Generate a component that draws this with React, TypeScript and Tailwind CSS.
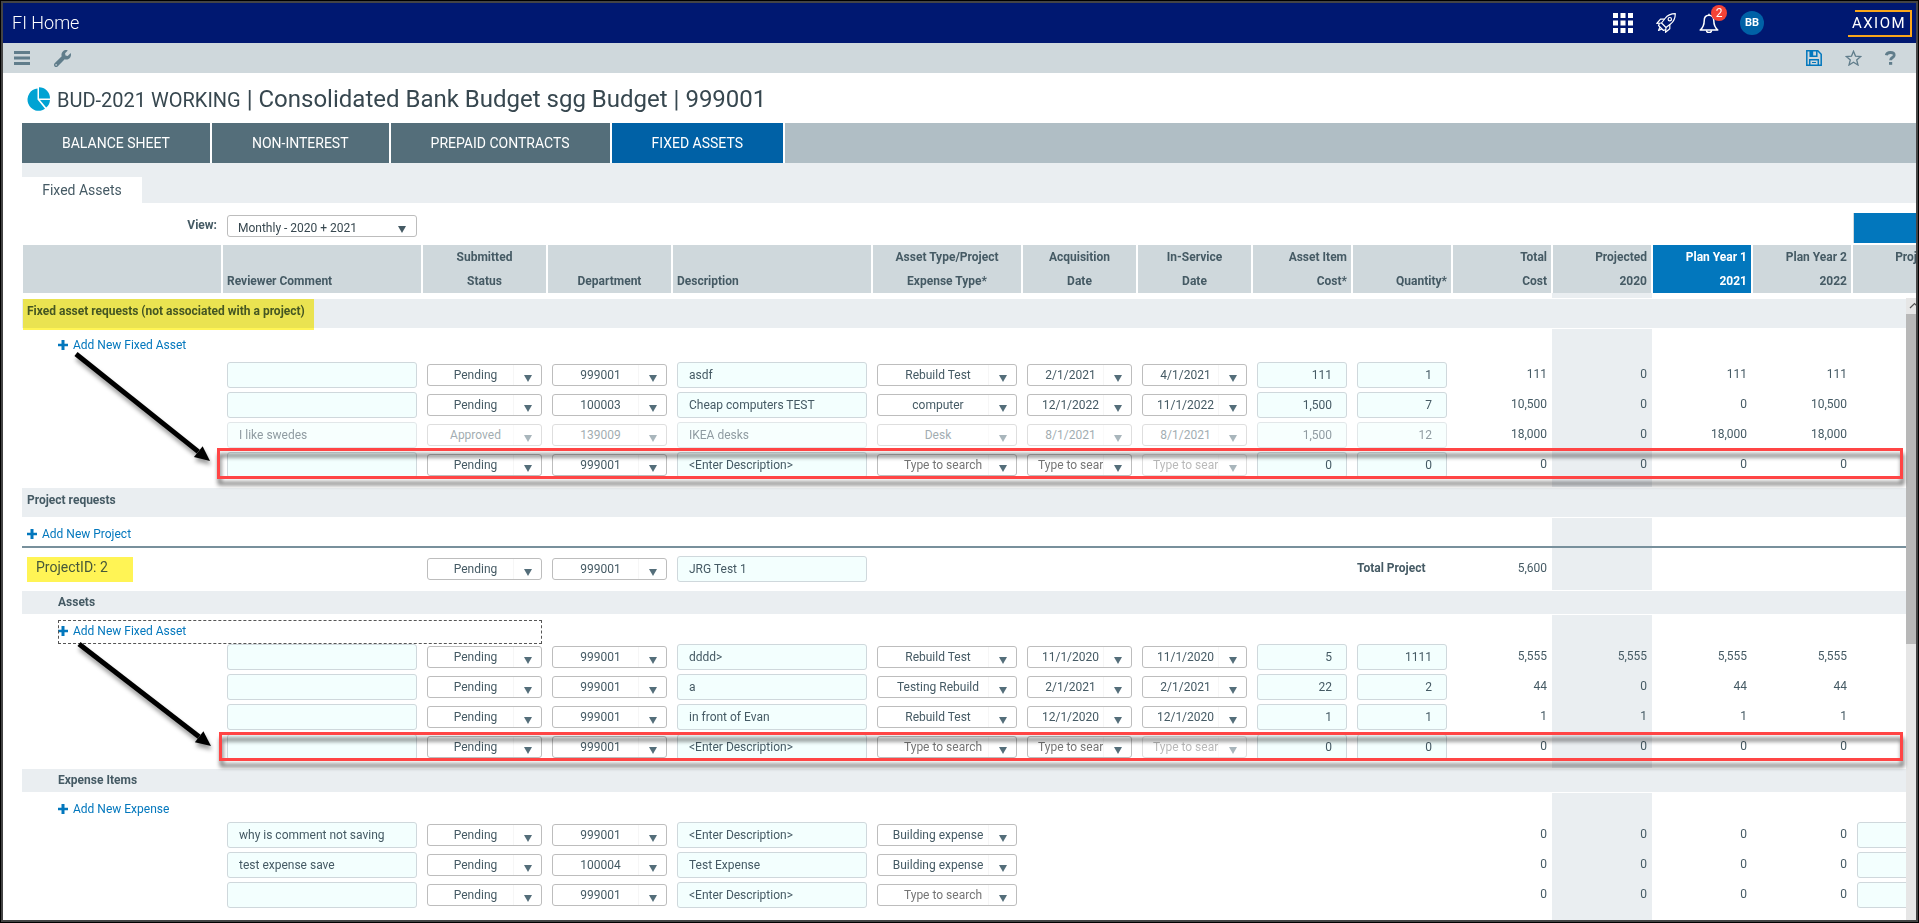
import React from "react";
import { FaWrench } from "react-icons/fa";

type Cell = { v: string; off?: boolean; hint?: boolean };
type Row = {
  comment?: string | null;
  status?: string;
  dept?: string;
  desc?: string;
  type?: Cell;
  acq?: Cell;
  svc?: Cell;
  cost?: string;
  qty?: string;
  totals: string[];
  off?: boolean;
  tail?: boolean;
};

const hint = "Type to search";
const blankAsset: Row = {
  comment: "",
  status: "Pending",
  dept: "999001",
  desc: "<Enter Description>",
  type: { v: hint, hint: true },
  acq: { v: hint, hint: true },
  svc: { v: hint, hint: true, off: true },
  cost: "0",
  qty: "0",
  totals: ["0", "0", "0", "0"],
};

const assets: Row[] = [
  { comment: "", status: "Pending", dept: "999001", desc: "asdf", type: { v: "Rebuild Test" }, acq: { v: "2/1/2021" }, svc: { v: "4/1/2021" }, cost: "111", qty: "1", totals: ["111", "0", "111", "111"] },
  { comment: "", status: "Pending", dept: "100003", desc: "Cheap computers TEST", type: { v: "computer" }, acq: { v: "12/1/2022" }, svc: { v: "11/1/2022" }, cost: "1,500", qty: "7", totals: ["10,500", "0", "0", "10,500"] },
  { comment: "I like swedes", status: "Approved", dept: "139009", desc: "IKEA desks", type: { v: "Desk" }, acq: { v: "8/1/2021" }, svc: { v: "8/1/2021" }, cost: "1,500", qty: "12", totals: ["18,000", "0", "18,000", "18,000"], off: true },
  blankAsset,
];

const projectAssets: Row[] = [
  { comment: "", status: "Pending", dept: "999001", desc: "dddd>", type: { v: "Rebuild Test" }, acq: { v: "11/1/2020" }, svc: { v: "11/1/2020" }, cost: "5", qty: "1111", totals: ["5,555", "5,555", "5,555", "5,555"] },
  { comment: "", status: "Pending", dept: "999001", desc: "a", type: { v: "Testing Rebuild" }, acq: { v: "2/1/2021" }, svc: { v: "2/1/2021" }, cost: "22", qty: "2", totals: ["44", "0", "44", "44"] },
  { comment: "", status: "Pending", dept: "999001", desc: "in front of Evan", type: { v: "Rebuild Test" }, acq: { v: "12/1/2020" }, svc: { v: "12/1/2020" }, cost: "1", qty: "1", totals: ["1", "1", "1", "1"] },
  blankAsset,
];

const expenses: Row[] = [
  { comment: "why is comment not saving", status: "Pending", dept: "999001", desc: "<Enter Description>", type: { v: "Building expense" }, totals: ["0", "0", "0", "0"], tail: true },
  { comment: "test expense save", status: "Pending", dept: "100004", desc: "Test Expense", type: { v: "Building expense" }, totals: ["0", "0", "0", "0"], tail: true },
  { comment: "", status: "Pending", dept: "999001", desc: "<Enter Description>", type: { v: hint, hint: true }, totals: ["0", "0", "0", "0"], tail: true },
];

function Columns() {
  return (
    <colgroup>
      <col className="w-[200px]" />
      <col className="w-[200px]" />
      <col className="w-[125px]" />
      <col className="w-[125px]" />
      <col className="w-[200px]" />
      <col className="w-[150px]" />
      <col className="w-[115px]" />
      <col className="w-[115px]" />
      <col className="w-[100px]" />
      <col className="w-[100px]" />
      <col className="w-[100px]" />
      <col className="w-[100px]" />
      <col className="w-[100px]" />
      <col className="w-[100px]" />
      <col className="w-[100px]" />
    </colgroup>
  );
}

function TextBox({ label, value, right, off }: { label: string; value: string; right?: boolean; off?: boolean }) {
  return (
    <input
      type="text"
      aria-label={label}
      defaultValue={value}
      disabled={off}
      className={`block h-[26px] w-full rounded-[3px] border border-[#cfd8dc] bg-[#f3fffe] text-xs text-[#455a64] ${
        right ? "pr-[14px] text-right" : "pl-[11px]"
      } ${off ? "opacity-60" : ""}`}
    />
  );
}

function Combo({ label, cell, off, wide }: { label: string; cell: Cell; off?: boolean; wide?: boolean }) {
  const dim = off || cell.off;
  return (
    <div className={`relative ${dim ? "opacity-50" : ""}`}>
      <select
        aria-label={label}
        disabled={dim}
        defaultValue={cell.v}
        className={`block h-[22px] w-full appearance-none rounded-[3px] border border-[#bdbdbd] bg-white pr-[28px] text-center text-xs ${
          cell.hint ? "text-[#757575]" : "text-[#455a64]"
        } ${cell.hint && wide ? "pl-5" : "pl-[10px]"}`}
      >
        <option>{cell.v}</option>
      </select>
      <span className="pointer-events-none absolute inset-y-px right-px flex w-7 justify-center border-l border-[#f6f6f6] pt-[10px]">
        <svg width="8" height="7" viewBox="0 0 8 7" className="fill-[#546e7a]">
          <path d="M0 0h8L4 7z" />
        </svg>
      </span>
    </div>
  );
}

function Amount({ value, shaded }: { value?: string; shaded?: boolean }) {
  return (
    <td className={`px-[5px] text-right align-top leading-7 ${shaded ? "bg-[#eaeef1]" : ""}`}>{value}</td>
  );
}

function DataRow({ row }: { row: Row }) {
  return (
    <tr className="h-[30px]">
      <td />
      <td className="px-[5px]">
        <TextBox label="Reviewer Comment" value={row.comment ?? ""} off={row.off} />
      </td>
      <td className="px-[5px]">
        <Combo label="Submitted Status" cell={{ v: row.status ?? "" }} off={row.off} />
      </td>
      <td className="px-[5px]">
        <Combo label="Department" cell={{ v: row.dept ?? "" }} off={row.off} />
      </td>
      <td className="px-[5px]">
        <TextBox label="Description" value={row.desc ?? ""} off={row.off} />
      </td>
      <td className="px-[5px]">{row.type && <Combo label="Asset Type" cell={row.type} off={row.off} wide />}</td>
      <td className="px-[5px]">{row.acq && <Combo label="Acquisition Date" cell={row.acq} off={row.off} />}</td>
      <td className="px-[5px]">{row.svc && <Combo label="In-Service Date" cell={row.svc} off={row.off} />}</td>
      <td className="px-[5px]">
        {row.cost && <TextBox label="Asset Item Cost" value={row.cost} right off={row.off} />}
      </td>
      <td className="px-[5px]">{row.qty && <TextBox label="Quantity" value={row.qty} right off={row.off} />}</td>
      <Amount value={row.totals[0]} />
      <Amount value={row.totals[1]} shaded />
      <Amount value={row.totals[2]} />
      <Amount value={row.totals[3]} />
      <td className="px-[5px]">{row.tail && <TextBox label="Projected" value="" right />}</td>
    </tr>
  );
}

function Section({ title, tall, marked }: { title: string; tall?: boolean; marked?: boolean }) {
  return (
    <tr>
      <td colSpan={15} className="border-y border-white bg-[#eaeef1] bg-clip-padding">
        <div className={`relative ${tall ? "h-[29px] pl-[5px] leading-6" : "h-[23px] pl-9 leading-[23px]"}`}>
          <b>{title}</b>
          {marked && <span className="absolute left-px top-0 h-[31px] w-[291px] bg-[#fff455] mix-blend-multiply" />}
        </div>
      </td>
    </tr>
  );
}

function Shade({ className }: { className: string }) {
  return (
    <tr className={className}>
      <td colSpan={11} />
      <td className="bg-[#eaeef1]" />
      <td colSpan={3} />
    </tr>
  );
}

function AddRow({ label, height, root, focused }: { label: string; height: string; root?: boolean; focused?: boolean }) {
  const line = root ? "border-b-2 border-[#78909c]" : "";
  return (
    <tr className={height}>
      <td colSpan={11} className={`align-top ${line} ${root ? "pl-[5px]" : "pl-9"}`}>
        <div className="relative pt-1.5">
          <a href="#add" className="flex h-5 items-center gap-[5px] text-[#0277bd]">
            <svg width="10" height="10" viewBox="0 0 10 10" fill="currentColor">
              <path d="M4 0h2.500v3.700H10v2.600H6.500V10H3.500V6.300H0V3.700h3.500V0z" />
            </svg>
            {label}
          </a>
          {focused && (
            <span className="pointer-events-none absolute left-0 top-[5px] h-6 w-[484px] border border-dashed border-[#555]" />
          )}
        </div>
      </td>
      <td className={`bg-[#eaeef1] ${line}`} />
      <td colSpan={3} className={line} />
    </tr>
  );
}

function Pointer({ className, x2, y2 }: { className: string; x2: number; y2: number }) {
  const len = Math.hypot(x2, y2);
  const ux = x2 / len;
  const uy = y2 / len;
  const bx = x2 - ux * 15;
  const by = y2 - uy * 15;
  const head = `${x2},${y2} ${bx - uy * 7},${by + ux * 7} ${bx + uy * 7},${by - ux * 7}`;
  return (
    <svg
      className={`pointer-events-none absolute overflow-visible drop-shadow-[1px_4px_2px_rgba(0,0,0,0.4)] ${className}`}
      width={x2}
      height={y2}
      aria-hidden="true"
    >
      <line x1="0" y1="0" x2={bx} y2={by} stroke="#000" strokeWidth="5" />
      <polygon points={head} fill="#000" />
    </svg>
  );
}

const heads: { lines: string[]; align: string; active?: boolean }[] = [
  { lines: [""], align: "text-left" },
  { lines: ["Reviewer Comment"], align: "text-left" },
  { lines: ["Submitted", "Status"], align: "text-center" },
  { lines: ["Department"], align: "text-center" },
  { lines: ["Description"], align: "text-left" },
  { lines: ["Asset Type/Project", "Expense Type*"], align: "text-center" },
  { lines: ["Acquisition", "Date"], align: "text-center" },
  { lines: ["In-Service", "Date"], align: "text-center" },
  { lines: ["Asset Item", "Cost*"], align: "text-right" },
  { lines: ["Quantity*"], align: "text-right" },
  { lines: ["Total", "Cost"], align: "text-right" },
  { lines: ["Projected", "2020"], align: "text-right" },
  { lines: ["Plan Year 1", "2021"], align: "text-right", active: true },
  { lines: ["Plan Year 2", "2022"], align: "text-right" },
  { lines: ["Projected", ""], align: "text-right" },
];

export default function App() {
  return (
    <div className="h-screen overflow-hidden border border-black font-[Roboto,'Liberation_Sans',sans-serif] text-xs text-[#455a64]">
      <div className="flex h-full flex-col overflow-hidden border-2 border-[#444] bg-white">
        <header className="flex h-10 shrink-0 items-center bg-[#001871] pl-[9px] pr-1 text-white">
          <h1 className="flex-1 text-lg font-light">FI Home</h1>
          <div className="flex items-center gap-[23px]">
            <button aria-label="Applications">
              <svg width="20" height="20" viewBox="0 0 20 20" fill="#fff">
                <path d="M0 0h5v5H0zM7.500 0h5v5h-5zM15 0h5v5h-5zM0 7.500h5v5H0zM7.500 7.500h5v5h-5zM15 7.500h5v5h-5zM0 15h5v5H0zM7.500 15h5v5h-5zM15 15h5v5h-5z" />
              </svg>
            </button>
            <button aria-label="Launch">
              <svg width="20" height="20" viewBox="0 0 20 20" fill="none" stroke="#fff" strokeWidth="1.200" strokeLinejoin="round">
                <path d="M19.300.7c-5 0-8 1.800-10.300 4.800L5.500 10l4.500 4.500 4.500-3.500c3-2.300 4.800-5.300 4.800-10.300z" />
                <path d="M8.500 6.200H4.500L.8 10.500l4.700-.5M13.800 11.500v4.300L9.500 19.300l.5-4.800" />
                <circle cx="13.800" cy="6.200" r="1.700" />
                <path d="M3.500 10.300l-1 2.200 5 5 2.300-1M4 14l-1.500 3.500L6 16" />
              </svg>
            </button>
            <button aria-label="Notifications" className="relative">
              <svg width="20" height="20" viewBox="0 0 20 20" fill="none" stroke="#fff" strokeWidth="1.500" strokeLinejoin="round">
                <path d="M10 .7v1.500M10 2.200c-3.300 0-4.800 2.500-4.800 5.500 0 4.500-1.200 6.800-4 9.300h17.600c-2.800-2.500-4-4.800-4-9.300 0-3-1.500-5.500-4.800-5.500z" />
                <path d="M7.500 17.300a2.500 2.300 0 0 0 5 0" />
              </svg>
              <span className="absolute -top-2 left-3 size-4 rounded-full bg-[#f44336] text-center text-xs leading-4">2</span>
            </button>
            <span className="-ml-0.5 flex size-6 items-center justify-center rounded-full bg-[#0061a6] text-[11px] font-bold">BB</span>
          </div>
          <div className="relative ml-[84px] h-[27px] w-16 border-y-2 border-r-2 border-[#faa61a] text-center text-[15px] leading-[23px] tracking-widest">
            AXIOM
            <span className="absolute -top-0.5 left-0 h-0.5 w-[7px] bg-[#001871]" />
          </div>
        </header>

        <div className="flex h-[30px] shrink-0 items-center bg-[#cfd8dc] pl-[11px] pr-5 text-[#607d8b]">
          <button aria-label="Menu">
            <svg width="16" height="14" viewBox="0 0 16 14" fill="currentColor">
              <path d="M0 0h16v3H0zM0 5.500h16v3H0zM0 11h16v3H0z" />
            </svg>
          </button>
          <button aria-label="Tools" className="ml-6 flex-1">
            <FaWrench size={17} />
          </button>
          <div className="flex items-center gap-[23px]">
            <button aria-label="Save">
              <svg width="16" height="16" viewBox="0 0 16 16" fill="none" stroke="#0277bd" strokeWidth="1.500">
                <path d="M.8.8h11l3.400 3.400v11H.8z" />
                <path d="M3.700 15V9.800h8.600V15M4.200 1v5.200h6.600V1" />
                <path d="M4.200 1h3v5h-3z" fill="#0277bd" stroke="none" />
                <path d="M6 12.500h4" strokeWidth="1" />
              </svg>
            </button>
            <button aria-label="Favorite">
              <svg width="17" height="16" viewBox="0 0 17 16" fill="none" stroke="currentColor" strokeWidth="1.300">
                <path d="M8.500 1.300l2 4.800 5.200.4-4 3.400 1.300 5.100-4.500-2.800L4 15l1.300-5.100-4-3.400 5.200-.4z" />
              </svg>
            </button>
            <button aria-label="Help" className="w-[11px]">
              <svg width="11" height="14" viewBox="0 0 11 14" fill="none" stroke="currentColor" strokeWidth="2.800">
                <path d="M1.300 4.200C1.700 2.300 3.300 1.500 5.300 1.500c2.300 0 3.900 1 3.900 2.700 0 2.300-3.600 2.300-3.600 5" />
                <path d="M4 12.400h3.200" />
              </svg>
            </button>
          </div>
        </div>

        <div className="flex min-h-0 flex-1 flex-col pl-[19px]">
          <div className="flex h-[50px] shrink-0 items-center gap-1.5 pl-[5px] pt-px text-[#37474f]">
            <svg width="24" height="24" viewBox="0 0 24 24" fill="#00a3d3">
              <path d="M10.500 1.500v11l7.500 9.200A11 11.200 0 1 1 10.500 1.500z" />
              <path d="M12 .3a11 11.200 0 0 1 11 11.200H12z" />
              <path d="M13 13h10a10.500 10.500 0 0 1-3.800 7.500z" />
            </svg>
            <h2 className="whitespace-pre text-2xl leading-8">
              <span className="text-xl">BUD-2021 WORKING</span> | Consolidated Bank Budget sgg Budget | 999001
            </h2>
          </div>

          <nav className="flex h-10 shrink-0 gap-0.5 text-sm text-white">
            <a href="#balance" className="flex items-center bg-[#546e7a] px-10">BALANCE SHEET</a>
            <a href="#non-interest" className="flex items-center bg-[#546e7a] px-10">NON-INTEREST</a>
            <a href="#prepaid" className="flex items-center bg-[#546e7a] px-10">PREPAID CONTRACTS</a>
            <a href="#fixed" className="flex items-center bg-[#0061a6] px-10">FIXED ASSETS</a>
            <span className="flex-1 bg-[#b0bec5]" />
          </nav>

          <div className="flex h-10 shrink-0 items-end bg-[#eaeef1]">
            <a href="#assets" className="flex h-[26px] w-[120px] items-center justify-center bg-white text-sm">Fixed Assets</a>
          </div>

          <div className="relative flex h-[42px] shrink-0 overflow-hidden pt-3">
            <label htmlFor="view" className="w-[200px] pr-[5px] text-right font-bold leading-5">View:</label>
            <div className="relative ml-[5px] h-[22px] w-[190px]">
              <select
                id="view"
                className="block h-[22px] w-full appearance-none rounded-[3px] border border-[#bdbdbd] bg-white pl-[10px] pt-1 text-[#37474f]"
              >
                <option>Monthly - 2020 + 2021</option>
              </select>
              <svg width="8" height="7" viewBox="0 0 8 7" className="pointer-events-none absolute right-[11px] top-[11px] fill-[#455a64]">
                <path d="M0 0h8L4 7z" />
              </svg>
            </div>
            <span className="absolute left-[1831px] right-0 top-[10px] h-[30px] border-l border-[#cfd8dc] bg-[#0277bd]" />
          </div>

          <div className="shrink-0 overflow-hidden">
            <table className="w-[1930px] table-fixed border-separate border-spacing-0">
              <Columns />
              <thead>
                <tr className="h-12">
                  {heads.map((h, i) => (
                    <th
                      key={i}
                      className={`border-x border-white px-1 align-bottom font-bold leading-6 ${h.align} ${
                        h.active ? "bg-[#0277bd] text-white" : "bg-[#cfd8dc]"
                      } bg-clip-padding`}
                    >
                      {h.lines.map((l, j) => (
                        <div key={j} className="min-h-6">
                          {l}
                        </div>
                      ))}
                    </th>
                  ))}
                </tr>
              </thead>
              <tbody>
                <Shade className="h-[5px]" />
              </tbody>
            </table>
          </div>

          <div className="relative flex min-h-0 flex-1">
            <div className="min-w-0 flex-1 overflow-hidden">
              <table className="w-[1930px] table-fixed border-separate border-spacing-0">
                <Columns />
                <tbody>
                  <Section title="Fixed asset requests (not associated with a project)" tall marked />
                  <AddRow label="Add New Fixed Asset" height="h-[31px]" />
                  {assets.map((r, i) => (
                    <DataRow key={i} row={r} />
                  ))}
                  <Shade className="h-[7px]" />
                  <Section title="Project requests" tall />
                  <AddRow label="Add New Project" height="h-[30px]" root />
                  <tr className="h-[42px]">
                    <td colSpan={2} className="pl-[5px]">
                      <div className="h-[25px] w-[106px] bg-[#fff455] pl-[9px] text-sm leading-[21px] text-[#47583a]">
                        ProjectID: 2
                      </div>
                    </td>
                    <td className="px-[5px]">
                      <Combo label="Project Status" cell={{ v: "Pending" }} />
                    </td>
                    <td className="px-[5px]">
                      <Combo label="Project Department" cell={{ v: "999001" }} />
                    </td>
                    <td className="px-[5px]">
                      <TextBox label="Project Description" value="JRG Test 1" />
                    </td>
                    <td colSpan={4} />
                    <td className="pb-0.5 pl-[5px] font-bold">Total Project</td>
                    <td className="pb-0.5 pr-[5px] text-right">5,600</td>
                    <td className="bg-[#eaeef1]" />
                    <td colSpan={3} />
                  </tr>
                  <Section title="Assets" />
                  <AddRow label="Add New Fixed Asset" height="h-[27px]" focused />
                  {projectAssets.map((r, i) => (
                    <DataRow key={i} row={r} />
                  ))}
                  <Shade className="h-[6px]" />
                  <Section title="Expense Items" />
                  <AddRow label="Add New Expense" height="h-[27px]" />
                  {expenses.map((r, i) => (
                    <DataRow key={i} row={r} />
                  ))}
                  <Shade className="h-6" />
                </tbody>
              </table>
            </div>
            <div className="flex w-[10px] shrink-0 flex-col overflow-hidden bg-[#e6e6e6]">
              <svg width="17" height="16" viewBox="0 0 17 16" fill="none" stroke="#555" strokeWidth="1.200" className="shrink-0">
                <path d="M4 10l4.500-4.500L13 10" />
              </svg>
              <span className="h-[330px] bg-[#b8b8b8]" />
            </div>
            <span className="pointer-events-none absolute left-[195px] right-[13px] top-[150px] h-[31px] border-3 border-[#ff4545] drop-shadow-[1px_6px_2px_rgba(0,0,0,0.6)]" />
            <span className="pointer-events-none absolute left-[197px] right-[13px] top-[434px] h-[29px] border-3 border-[#ff4545] drop-shadow-[1px_6px_2px_rgba(0,0,0,0.6)]" />
            <Pointer className="left-[54px] top-[56px]" x2={134} y2={107} />
            <Pointer className="left-[57px] top-[346px]" x2={132} y2={102} />
          </div>
        </div>
      </div>
    </div>
  );
}
